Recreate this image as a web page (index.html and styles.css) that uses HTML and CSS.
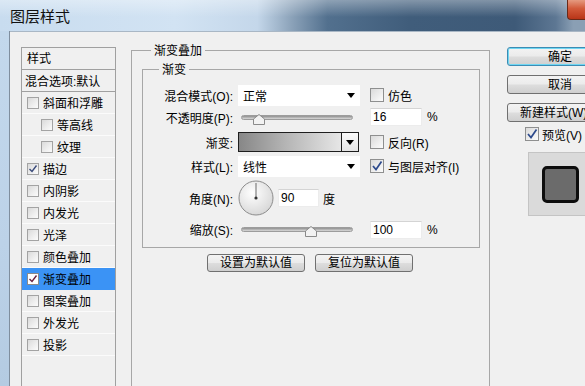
FILE: index.html
```html
<!DOCTYPE html>
<html lang="zh-CN">
<head>
<meta charset="utf-8">
<title>图层样式</title>
<link rel="stylesheet" href="styles.css">
</head>
<body>
<div class="window">
  <div class="titlebar">
    <span class="title">图层样式</span>
    <span class="close"></span>
  </div>
  <div class="frame">
    <div class="frame-left"></div>
    <div class="client">
      <ul class="stylelist">
        <li class="head">样式</li>
        <li class="blend">混合选项:默认</li>
        <li class="item"><span class="cb"></span>斜面和浮雕</li>
        <li class="item sub"><span class="cb"></span>等高线</li>
        <li class="item sub"><span class="cb"></span>纹理</li>
        <li class="item"><span class="cb"><svg viewBox="0 0 10 10" width="10" height="10"><path d="M1.5 5 L4 7.5 L8.5 1.5" fill="none" stroke="#3a4a7a" stroke-width="1.4"/></svg></span>描边</li>
        <li class="item"><span class="cb"></span>内阴影</li>
        <li class="item"><span class="cb"></span>内发光</li>
        <li class="item"><span class="cb"></span>光泽</li>
        <li class="item"><span class="cb"></span>颜色叠加</li>
        <li class="item selected"><span class="cb white"><svg viewBox="0 0 10 10" width="10" height="10"><path d="M1.5 5 L4 7.5 L8.5 1.5" fill="none" stroke="#6a2040" stroke-width="1.4"/></svg></span>渐变叠加</li>
        <li class="item"><span class="cb"></span>图案叠加</li>
        <li class="item"><span class="cb"></span>外发光</li>
        <li class="item"><span class="cb"></span>投影</li>
      </ul>

      <div class="group outer">
        <div class="group-title outer-title">渐变叠加</div>
        <div class="group inner">
          <div class="group-title inner-title">渐变</div>
          <div class="grid">
            <label class="lbl">混合模式(O):</label>
            <div class="select"><span>正常</span><i class="tri"></i></div>
            <div class="extra"><span class="cb big"></span>仿色</div>

            <label class="lbl">不透明度(P):</label>
            <div class="slider op"><div class="track"></div><svg class="thumb" style="left:calc(16% - 6px)" width="12" height="11" viewBox="0 0 12 11"><path d="M0.5 10.5 V5 L6 0.5 L11.5 5 V10.5 Z" fill="#f2f2f2" stroke="#8a8a8a"/></svg></div>
            <div class="extra"><span class="field">16</span><span class="unit">%</span></div>

            <label class="lbl">渐变:</label>
            <div class="gradbox"><div class="grad"></div><div class="gbtn"><i class="tri"></i></div></div>
            <div class="extra"><span class="cb big"></span>反向(R)</div>

            <label class="lbl">样式(L):</label>
            <div class="select"><span>线性</span><i class="tri"></i></div>
            <div class="extra"><span class="cb big"><svg viewBox="0 0 12 12" width="12" height="12"><path d="M2 6 L5 9.5 L10.5 1.5" fill="none" stroke="#2d4a8c" stroke-width="1.7"/></svg></span>与图层对齐(I)</div>

            <label class="lbl">角度(N):</label>
            <div class="angle">
              <svg class="dial" width="36" height="36" viewBox="0 0 36 36">
                <defs><radialGradient id="dg" cx="0.4" cy="0.35" r="0.7"><stop offset="0" stop-color="#ffffff"/><stop offset="1" stop-color="#d6d6d6"/></radialGradient></defs>
                <circle cx="18" cy="18" r="17" fill="url(#dg)" stroke="#8c8c8c"/>
                <line x1="18" y1="18" x2="18" y2="3" stroke="#6a6a6a" stroke-width="1"/>
                <circle cx="18" cy="18" r="1.6" fill="#333"/>
              </svg>
              <span class="field short">90</span><span class="unit deg">度</span>
            </div>

            <label class="lbl">缩放(S):</label>
            <div class="slider sc"><div class="track"></div><svg class="thumb" style="left:calc(61% - 6px)" width="12" height="11" viewBox="0 0 12 11"><path d="M0.5 10.5 V5 L6 0.5 L11.5 5 V10.5 Z" fill="#f2f2f2" stroke="#8a8a8a"/></svg></div>
            <div class="extra"><span class="field">100</span><span class="unit">%</span></div>
          </div>
        </div>
        <div class="btnrow">
          <button class="btn small">设置为默认值</button>
          <button class="btn small">复位为默认值</button>
        </div>
      </div>

      <div class="side">
        <button class="btn wide default">确定</button>
        <button class="btn wide">取消</button>
        <button class="btn wide left">新建样式(W)...</button>
        <div class="preview-check"><span class="cb big"><svg viewBox="0 0 12 12" width="12" height="12"><path d="M2 6 L5 9.5 L10.5 1.5" fill="none" stroke="#2d4a8c" stroke-width="1.7"/></svg></span>预览(V)</div>
        <div class="preview"><div class="swatch"></div></div>
      </div>
    </div>
  </div>
</div>
</body>
</html>
```
FILE: styles.css
```css
* { box-sizing: border-box; margin: 0; padding: 0; }
html, body { width: 585px; height: 386px; overflow: hidden; }
body {
  font-family: "Liberation Sans", "Noto Sans CJK SC", sans-serif;
  font-size: 12px;
  color: #000;
  background: #f0f0f0;
}
.window { width: 585px; height: 386px; display: flex; flex-direction: column; overflow: hidden; }

.titlebar {
  height: 31px;
  flex: none;
  display: flex;
  align-items: flex-start;
  background:
    linear-gradient(180deg, rgba(255,255,255,0.35) 0%, rgba(255,255,255,0) 55%),
    linear-gradient(90deg, #c8dcef 0%, #d2e3f3 30%, #c4d7ea 44%, #8aa1b8 50%, #52708e 56%, #405d7b 70%, #3e5a78 88%, #5d7793 95%, #8a9fb4 98%);
}
.title {
  font-family: "Noto Sans CJK SC", sans-serif;
  font-size: 15px;
  line-height: 31px;
  padding-left: 10px;
  color: #111;
}
.close {
  margin-left: auto;
  width: 18px;
  height: 20px;
  background: linear-gradient(180deg, #e59a80 0%, #d25a3a 45%, #b83518 100%);
  border-left: 1px solid #6a2a18;
  border-bottom: 1px solid #6a2a18;
  border-bottom-left-radius: 4px;
}

.frame { flex: 1; display: flex; min-height: 0; overflow: hidden; }
.frame-left {
  width: 10px;
  flex: none;
  background: linear-gradient(180deg, #c3d8ec 0%, #bcd2e8 60%, #b4cbe2 100%);
  border-right: 1px solid #7f8e9e;
}
.client {
  flex: 1;
  min-width: 0;
  display: flex;
  align-items: flex-start;
  padding-left: 11px;
  border-top: 1px solid #a9b7c5;
  background: #f0f0f0;
  overflow: hidden;
}

/* style list */
.stylelist {
  list-style: none;
  width: 95px;
  height: 340px;
  flex: none;
  margin-top: 15px;
  border: 1px solid #a0a0a0;
  background: #f0f0f0;
}
.stylelist li {
  height: 22px;
  display: flex;
  align-items: center;
  padding-left: 5px;
  white-space: nowrap;
  border-bottom: 1px solid #fbfbfb;
}
.stylelist .head { height: 22px; padding-bottom: 3px; border-bottom: 1px solid #a0a0a0; }
.stylelist .blend { padding-left: 3px; border-bottom: 1px solid #a0a0a0; }
.stylelist .sub { padding-left: 19px; }
.stylelist .selected { background: #3b93f5; border-bottom-color: #3b93f5; }

.cb {
  width: 12px;
  height: 12px;
  flex: none;
  margin-right: 4px;
  border: 1px solid #a3a3a3;
  background: linear-gradient(135deg, #dadada 0%, #f2f2f2 70%, #fbfbfb 100%);
  display: inline-flex;
  align-items: center;
  justify-content: center;
}
.cb.white { background: #fff; border-color: #8a8a8a; }
.cb.big { width: 14px; height: 14px; border-color: #8e8f8f; }

/* group boxes */
.group { border: 1px solid #a7a7a7; }
.group-title {
  width: fit-content;
  margin-top: -9px;
  padding: 0 3px;
  height: 16px;
  line-height: 16px;
  background: #f0f0f0;
  font-family: "Noto Sans CJK SC", sans-serif;
}
.outer {
  width: 359px;
  height: 337px;
  flex: none;
  margin-left: 15px;
  margin-top: 18px;
  padding-left: 10px;
}
.outer-title { margin-left: 9px; }
.inner {
  width: 338px;
  margin-top: 11px;
  padding-bottom: 8px;
}
.inner-title { margin-left: 16px; }

.grid {
  display: grid;
  grid-template-columns: 95px 130px auto;
  grid-template-rows: 22px 22px 28px 20px 44px 19px;
  align-items: center;
  margin-top: 7px;
}
.lbl { text-align: right; padding-right: 5px; white-space: nowrap; }
.extra { display: flex; align-items: center; padding-left: 2px; white-space: nowrap; }
.extra .field + .unit { margin-left: 5px; }

.select {
  width: 122px;
  height: 21px;
  background: #fff;
  display: flex;
  align-items: center;
  padding-left: 5px;
}
.tri {
  margin-left: auto;
  margin-right: 5px;
  width: 0;
  height: 0;
  border-left: 4px solid transparent;
  border-right: 4px solid transparent;
  border-top: 5px solid #000;
}

.slider { position: relative; width: 115px; height: 100%; display: flex; align-items: center; padding-left: 3px; }
.track {
  width: 112px;
  height: 5px;
  border-radius: 3px;
  border: 1px solid #9c9c9c;
  background: linear-gradient(180deg, #8f8f8f, #d9d9d9);
}
.thumb { position: absolute; margin-left: 3px; }
.slider.op .thumb { top: 8px; }
.slider.sc .thumb { top: 6px; }

.gradbox {
  width: 121px;
  height: 20px;
  border: 1px solid #1e1e1e;
  display: flex;
}
.grad { flex: 1; background: linear-gradient(90deg, #878787 0%, #b4b4b4 45%, #e6e6e6 100%); }
.gbtn {
  width: 17px;
  border-left: 1px solid #1e1e1e;
  background: linear-gradient(180deg, #fafafa, #e4e4e4);
  display: flex;
  align-items: center;
}
.gbtn .tri { margin: 0 auto; }

.field {
  width: 52px;
  height: 18px;
  background: #fff;
  border: 1px solid #ececec;
  border-top-color: #d4d4d4;
  padding-left: 2px;
  line-height: 16px;
}
.field.short { width: 41px; }
.angle { grid-column: 2 / 4; display: flex; align-items: center; }
.dial { display: block; }
.angle .field { margin-left: 4px; }
.unit.deg { margin-left: 4px; font-family: "Noto Sans CJK SC", sans-serif; }

.btnrow { display: flex; gap: 10px; margin-top: 6px; padding-left: 65px; }

.btn {
  font: inherit;
  color: #000;
  height: 19px;
  border: 1px solid #707070;
  border-radius: 3px;
  background: linear-gradient(180deg, #f3f3f3 0%, #ebebeb 48%, #dddddd 52%, #cfcfcf 100%);
  line-height: 16px;
  text-align: center;
  white-space: nowrap;
  overflow: hidden;
}
.btn.small { width: 98px; height: 18px; }
.btn.wide { width: 106px; flex: none; }
.btn.left { text-align: left; padding-left: 12px; }
.btn.default { border-color: #3c8cb4; box-shadow: inset 0 0 0 1px #6fd6f2; }
.side {
  width: 106px;
  flex: none;
  margin-left: 17px;
  margin-top: 15px;
  display: flex;
  flex-direction: column;
  gap: 9px;
}
.preview-check {
  display: flex;
  align-items: center;
  height: 16px;
  margin-top: -5px;
  margin-left: 18px;
  white-space: nowrap;
}
.preview-check .cb { margin-right: 3px; }
.preview {
  width: 64px;
  height: 64px;
  margin-left: 21px;
  margin-top: 1px;
  background: #dadada;
  border: 1px solid #c4c4c4;
  display: flex;
  align-items: center;
  justify-content: center;
}
.swatch {
  width: 37px;
  height: 37px;
  border: 3px solid #0d0d0d;
  border-radius: 5px;
  background: #6b6b6b;
}
```
